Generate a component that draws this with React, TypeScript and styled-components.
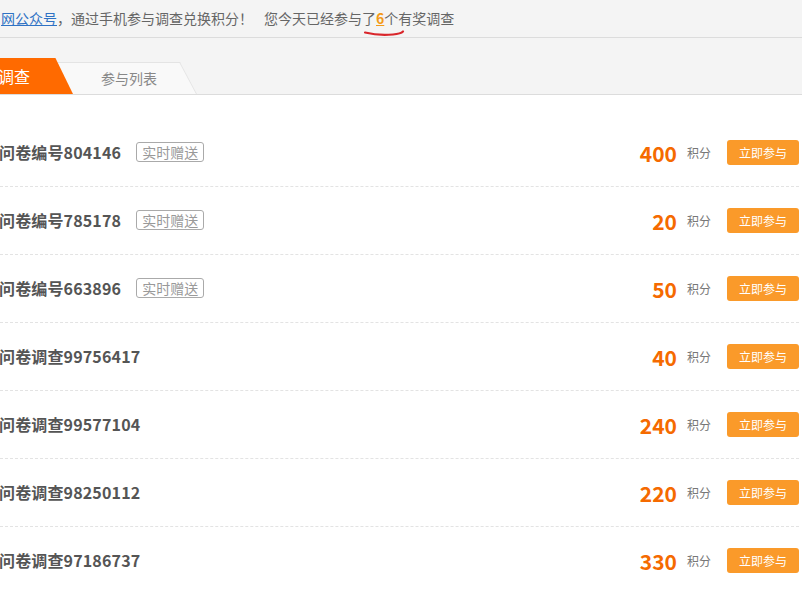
import React from 'react';
import styled, { createGlobalStyle } from 'styled-components';

const GlobalStyle = createGlobalStyle`
  html, body {
    margin: 0;
    padding: 0;
    background: #fff;
    overflow: hidden;
  }
  body {
    font-family: "Noto Sans CJK SC", "Noto Sans", sans-serif;
  }
`;

const Page = styled.div`
  width: 802px;
  height: 594px;
  overflow: hidden;
  background: #fff;
`;

// Thanh thông báo phía trên
const Notice = styled.div`
  height: 37px;
  line-height: 36px;
  background: #f4f4f4;
  border-bottom: 1px solid #dcdcdc;
  font-size: 14px;
  color: #666;
  white-space: nowrap;
  position: relative;
`;

const Link = styled.a`
  color: #2f72c4;
  text-decoration: underline;
  margin-left: 1px;
`;

const Today = styled.span`
  margin-left: 11px;
`;

const Count = styled.b`
  color: #f39a18;
  text-decoration: underline;
`;

const Scribble = styled.svg`
  position: absolute;
  left: 363px;
  top: 29px;
`;

// Tab
const TabBar = styled.div`
  height: 56px;
  background: #f4f4f4;
  border-bottom: 1px solid #dcdcdc;
  display: flex;
  align-items: flex-end;
`;

const Tab = styled.div<{ $active?: boolean }>`
  position: relative;
  height: ${p => (p.$active ? 36 : 32)}px;
  line-height: ${p => (p.$active ? 36 : 33)}px;
  font-size: ${p => (p.$active ? 16 : 14)}px;
  color: ${p => (p.$active ? '#fff' : '#888')};
  z-index: ${p => (p.$active ? 2 : 1)};
  margin-left: ${p => (p.$active ? -30 : -40)}px;
  width: ${p => (p.$active ? 103 : 164)}px;
  padding-left: ${p => (p.$active ? 28 : 68)}px;
  box-sizing: border-box;

  &::before {
    content: '';
    position: absolute;
    inset: 0;
    z-index: -1;
    transform-origin: bottom left;
    transform: skewX(${p => (p.$active ? 26 : 28)}deg);
    background: ${p => (p.$active ? '#ff6a00' : '#f9f9f9')};
    border: ${p => (p.$active ? 'none' : '1px solid #e4e4e4')};
    border-bottom: none;
  }
`;

// Danh sách khảo sát
const List = styled.div`
  padding: 24px 3px 0 0;
`;

const Row = styled.div`
  height: 68px;
  display: flex;
  align-items: center;
  border-bottom: 1px dashed #e3e3e3;
  box-sizing: border-box;
`;

const Title = styled.div`
  font-size: 16px;
  font-weight: bold;
  color: #555;
  margin: -2px 0 0 -1px;
  letter-spacing: 0.15px;
`;

const Tag = styled.span`
  margin: -2px 0 0 15px;
  border: 1px solid #aaa;
  border-radius: 3px;
  font-size: 14px;
  color: #999;
  height: 18px;
  line-height: 18px;
  padding: 0 5px;
`;

const Points = styled.div`
  margin-left: auto;
  font-size: 21px;
  font-weight: bold;
  color: #f56a00;
`;

const Unit = styled.span`
  font-size: 12px;
  color: #777;
  margin: 0 16px 0 10px;
`;

const JoinButton = styled.button`
  width: 72px;
  height: 25px;
  border: none;
  border-radius: 3px;
  background: #fa9a2a;
  color: #fff;
  font-family: inherit;
  font-size: 12px;
  padding: 0;
  cursor: pointer;
`;

const surveys = [
  { title: '问卷编号804146', tag: true, points: 400 },
  { title: '问卷编号785178', tag: true, points: 20 },
  { title: '问卷编号663896', tag: true, points: 50 },
  { title: '问卷调查99756417', tag: false, points: 40 },
  { title: '问卷调查99577104', tag: false, points: 240 },
  { title: '问卷调查98250112', tag: false, points: 220 },
  { title: '问卷调查97186737', tag: false, points: 330 },
];

export default function App() {
  return (
    <Page>
      <GlobalStyle />
      <Notice>
        <Link>网公众号</Link>，通过手机参与调查兑换积分！
        <Today>
          您今天已经参与了<Count>6</Count>个有奖调查
        </Today>
        <Scribble width="44" height="10" viewBox="0 0 44 10">
          <path
            d="M2 3.5 C 10 5.5, 20 6.5, 30 5.5 C 35 5, 38 4.5, 40 2.5"
            stroke="#d9262b"
            strokeWidth="2.2"
            fill="none"
            strokeLinecap="round"
          />
        </Scribble>
      </Notice>
      <TabBar>
        <Tab $active>调查</Tab>
        <Tab>参与列表</Tab>
      </TabBar>
      <List>
        {surveys.map(s => (
          <Row key={s.title}>
            <Title>{s.title}</Title>
            {s.tag && <Tag>实时赠送</Tag>}
            <Points>{s.points}</Points>
            <Unit>积分</Unit>
            <JoinButton>立即参与</JoinButton>
          </Row>
        ))}
      </List>
    </Page>
  );
}
